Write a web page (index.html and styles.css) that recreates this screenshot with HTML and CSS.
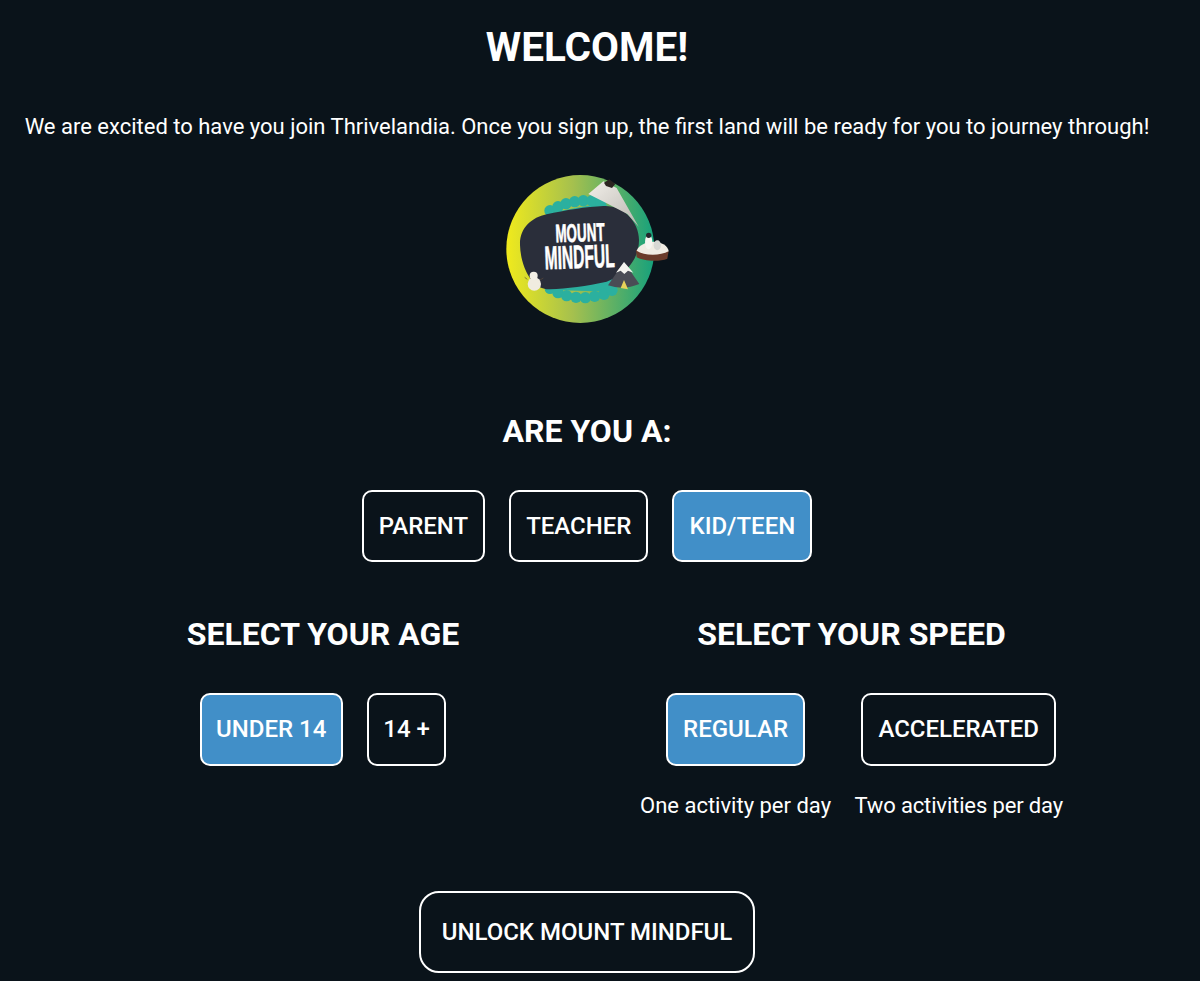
FILE: index.html
```html
<!DOCTYPE html>
<html lang="en">
<head>
    <meta charset="UTF-8">
    <meta name="viewport" content="width=device-width, initial-scale=1.0">
    <title>Welcome to Thrivelandia</title>
    <link rel="stylesheet" href="styles.css">
</head>
<body>
    <div class="page">
        <h1>WELCOME!</h1>
        <p class="intro">We are excited to have you join Thrivelandia. Once you sign up, the first land will be ready for you to journey through!</p>

        <svg class="land-logo" viewBox="0 0 600 540" role="img" aria-label="Mount Mindful">
            <defs>
                <linearGradient id="ring" x1="0" y1="0" x2="1" y2="0">
                    <stop offset="0" stop-color="#f0ea1c"/>
                    <stop offset="0.45" stop-color="#a5c04e"/>
                    <stop offset="1" stop-color="#16a17c"/>
                </linearGradient>
                <linearGradient id="paper" x1="0" y1="0" x2="1" y2="1">
                    <stop offset="0" stop-color="#f2efe9"/>
                    <stop offset="1" stop-color="#b9b6b0"/>
                </linearGradient>
            </defs>
            <circle cx="271" cy="267" r="222" fill="url(#ring)"/>
            <!-- scallops -->
            <path d="M170 160L345 128L380 180L380 395L175 390Z" fill="#2bb09f"/>
            <g fill="#2bb09f">
                <circle cx="180" cy="152" r="17"/><circle cx="204" cy="140" r="17"/><circle cx="228" cy="131" r="17"/>
                <circle cx="254" cy="125" r="17"/><circle cx="280" cy="122" r="17"/><circle cx="306" cy="122" r="17"/>
                <circle cx="332" cy="127" r="17"/>
                <circle cx="180" cy="386" r="16"/><circle cx="204" cy="398" r="17"/><circle cx="230" cy="407" r="17"/>
                <circle cx="258" cy="412" r="17"/><circle cx="286" cy="413" r="17"/><circle cx="314" cy="409" r="17"/>
                <circle cx="342" cy="403" r="17"/><circle cx="366" cy="391" r="17"/>
            </g>
            <path d="M90 255C88 205 125 172 170 163C225 151 290 140 340 138C400 135 447 185 447 240C447 300 405 345 350 365C290 378 230 386 180 388C125 390 92 320 90 255Z" fill="#2a2e3a"/>
            <!-- paper peak -->
            <path d="M295 102L340 64L380 84L446 200L412 162L350 130Z" fill="url(#paper)"/>
            <path d="M342 68L358 58L376 72L366 84L348 78Z" fill="#2c2420"/>
            <!-- penguin island -->
            <path d="M438 270L536 272L532 296C510 306 460 304 440 292Z" fill="#6b3b2a"/>
            <path d="M440 272C445 255 470 245 490 245C515 245 535 258 536 274C510 288 462 288 440 272Z" fill="#f1ede4"/>
            <ellipse cx="476" cy="246" rx="11" ry="22" fill="#f7f5f0"/>
            <circle cx="476" cy="226" r="8" fill="#23262c"/>
            <ellipse cx="502" cy="256" rx="11" ry="15" fill="#d8d8d4"/>
            <!-- snowman -->
            <circle cx="133" cy="372" r="20" fill="#f0ece0"/>
            <circle cx="131" cy="347" r="12" fill="#f4f0e6"/>
            <path d="M112 358L104 352M150 360L160 354" stroke="#5a4a3a" stroke-width="2"/>
            <!-- little mountain -->
            <path d="M354 376L402 306L448 372Q400 392 354 376Z" fill="#4a4c55"/>
            <path d="M378 338L402 306L430 338L414 332L403 342L392 332Z" fill="#f4f3ef"/>
            <path d="M392 384L402 360L414 388Z" fill="#e6d25a"/>
            <text class="logo-word" font-size="76" transform="translate(197 247) rotate(-2) scale(0.53 1)">MOUNT</text>
            <text class="logo-word" font-size="98" transform="translate(165 328) rotate(-2) scale(0.476 1)">MINDFUL</text>
        </svg>

        <h2 class="role-title">ARE YOU A:</h2>
        <div class="btn-row role-row">
            <button class="choice">PARENT</button>
            <button class="choice">TEACHER</button>
            <button class="choice active">KID/TEEN</button>
        </div>

        <div class="options">
            <div class="age-col">
                <h2>SELECT YOUR AGE</h2>
                <div class="btn-row option-row">
                    <button class="choice active">UNDER 14</button>
                    <button class="choice">14 +</button>
                </div>
            </div>
            <div class="speed-col">
                <h2>SELECT YOUR SPEED</h2>
                <div class="speed-row">
                    <div class="speed">
                        <button class="choice active">REGULAR</button>
                        <span>One activity per day</span>
                    </div>
                    <div class="speed speed-fast">
                        <button class="choice">ACCELERATED</button>
                        <span>Two activities per day</span>
                    </div>
                </div>
            </div>
        </div>

        <div class="unlock-wrap">
            <button class="unlock">UNLOCK MOUNT MINDFUL</button>
        </div>
    </div>
</body>
</html>
```

FILE: styles.css
```css
body {
    margin: 0;
    background: #0a131a;
    color: #fff;
    font-family: Roboto, "Open Sans", sans-serif;
}
.page {
    width: 1174px;
    padding-bottom: 8px;
    text-align: center;
}
h1 {
    margin: 0;
    padding-top: 22px;
    font-size: 40.5px;
    line-height: 50px;
    font-weight: 700;
}
h2 {
    margin: 0;
    font-size: 32px;
    line-height: 40px;
    font-weight: 700;
}
.intro {
    margin: 40px 0 0;
    font-size: 22px;
    line-height: 30px;
    white-space: nowrap;
}
.land-logo {
    display: block;
    width: 200px;
    height: 180px;
    margin: 18px 0 0 490px;
}
.logo-word {
    fill: #fff;
    stroke: #fff;
    stroke-width: 2px;
    font-family: "Liberation Sans", sans-serif;
    font-weight: 700;
}
.role-title {
    margin-top: 71px;
}
.btn-row {
    display: flex;
    justify-content: center;
    gap: 24px;
}
.role-row {
    margin-top: 39px;
}
.option-row {
    margin-top: 39px;
}
.choice {
    height: 72px;
    padding: 0 15px;
    background: transparent;
    border: 2px solid #fff;
    border-radius: 10px;
    color: #fff;
    font-family: inherit;
    font-size: 24px;
    font-weight: 500;
    white-space: nowrap;
}
.choice.active {
    background: #418fc8;
}
.options {
    display: flex;
    gap: 180px;
    margin-top: 52px;
    padding-left: 186px;
}
.age-col {
    width: 274px;
}
.speed-col {
    width: 423px;
}
.option-row .choice,
.speed-row .choice {
    height: 73px;
    padding-bottom: 2px;
}
.option-row .choice {
    padding-left: 14.5px;
    padding-right: 14.5px;
}
.speed-row {
    display: flex;
    justify-content: space-between;
    margin-top: 39px;
}
.speed {
    display: flex;
    flex-direction: column;
    align-items: center;
    gap: 27px;
    font-size: 22px;
    line-height: 26px;
}
.speed-fast span {
    letter-spacing: -0.14px;
}
.unlock-wrap {
    display: flex;
    justify-content: center;
    margin-top: 72px;
}
.unlock {
    width: 336px;
    height: 82px;
    background: transparent;
    border: 2px solid #fff;
    border-radius: 20px;
    color: #fff;
    font-family: inherit;
    font-size: 24px;
    font-weight: 500;
}
```
